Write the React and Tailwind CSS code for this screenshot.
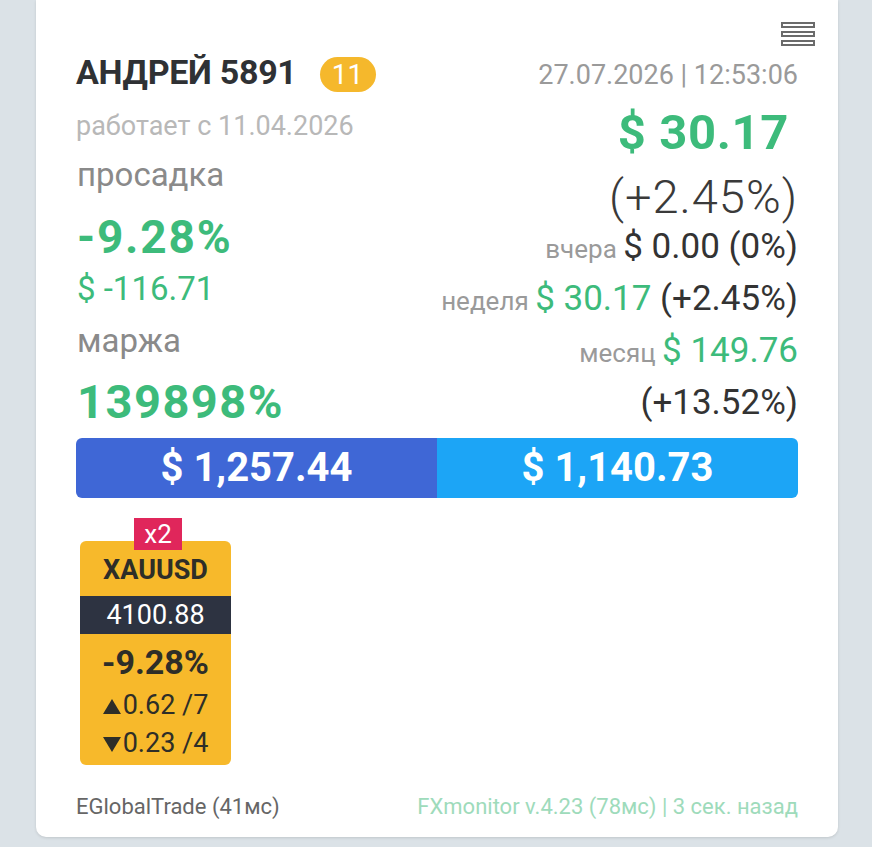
export default function App() {
  const font = { fontFamily: "Roboto, 'Noto Sans', sans-serif" };
  return (
    <div className="w-[872px] h-[847px] bg-[#dbe2e7] overflow-hidden" style={font}>
      <div className="ml-[36px] w-[802px] h-[837px] bg-white rounded-b-[10px] shadow-[0_1px_3px_rgba(0,0,0,0.12)] px-[40px] flex flex-col">
        {/* top section */}
        <div className="flex justify-between items-start pt-[22px]">
          {/* left column */}
          <div className="flex flex-col mt-[30px]">
            <div className="h-[40px] flex items-center">
              <span className="text-[34px] leading-[40px] font-bold text-[#2f3134] tracking-[-0.3px]">АНДРЕЙ 5891</span>
              <span className="ml-[23px] mt-[4px] w-[56px] h-[35px] rounded-full bg-[#f5b82c] text-white text-[28px] leading-[35px] text-center">11</span>
            </div>
            <div className="mt-[18px] h-[32px] text-[27px] leading-[32px] text-[#b8b8b8] whitespace-nowrap">работает с 11.04.2026</div>
            <div className="mt-[15px] pl-[1px] h-[36px] text-[33px] leading-[36px] text-[#8a8a8a]">просадка</div>
            <div className="mt-[20px] pl-[1px] h-[48px] text-[46px] leading-[48px] font-bold text-[#3dbb7b] tracking-[1.8px]">-9.28%</div>
            <div className="mt-[10px] pl-[1px] h-[36px] text-[33px] leading-[36px] text-[#3dbb7b]">$ -116.71</div>
            <div className="mt-[16px] pl-[1px] h-[36px] text-[33px] leading-[36px] text-[#8a8a8a]">маржа</div>
            <div className="mt-[19px] pl-[1px] h-[48px] text-[47px] leading-[48px] font-bold text-[#3dbb7b] tracking-[1.5px]">139898%</div>
          </div>
          {/* right column */}
          <div className="flex flex-col items-end">
            <div className="flex flex-col gap-[3px] mr-[-17px]">
              <div className="w-[34px] h-[6px] border-2 border-[#6b6b6b]"></div>
              <div className="w-[34px] h-[6px] border-2 border-[#6b6b6b]"></div>
              <div className="w-[34px] h-[6px] border-2 border-[#6b6b6b]"></div>
            </div>
            <div className="mt-[13px] h-[32px] text-[27px] leading-[32px] text-[#9a9a9a] whitespace-nowrap">27.07.2026 | 12:53:06</div>
            <div className="mt-[17px] mr-[9px] h-[50px] text-[49px] leading-[50px] font-bold text-[#3dbb7b] tracking-[0.6px] whitespace-nowrap">$ 30.17</div>
            <div className="mt-[14px] h-[50px] text-[47px] leading-[50px] font-light text-[#3a3a3a] tracking-[1px]">(+2.45%)</div>
            <div className="mt-[5px] h-[40px] flex items-baseline whitespace-nowrap leading-[40px]">
              <span className="text-[26px] text-[#9a9a9a]">вчера&nbsp;</span>
              <span className="text-[35px] text-[#333]">$ 0.00 (0%)</span>
            </div>
            <div className="mt-[12px] h-[40px] flex items-baseline whitespace-nowrap leading-[40px]">
              <span className="text-[26px] text-[#9a9a9a]">неделя&nbsp;</span>
              <span className="text-[35px] text-[#3dbb7b]">$ 30.17&nbsp;</span>
              <span className="text-[35px] text-[#333]">(+2.45%)</span>
            </div>
            <div className="mt-[12px] h-[40px] flex items-baseline whitespace-nowrap leading-[40px]">
              <span className="text-[26px] text-[#9a9a9a]">месяц&nbsp;</span>
              <span className="text-[35px] text-[#3dbb7b]">$ 149.76</span>
            </div>
            <div className="mt-[12px] h-[40px] leading-[40px] text-[35px] text-[#333]">(+13.52%)</div>
          </div>
        </div>

        {/* balance bar */}
        <div className="mt-[12px] h-[60px] flex rounded-[6px] overflow-hidden shrink-0">
          <div className="flex-1 bg-[#3f67d6] flex items-center justify-center text-white text-[40px] font-bold">$ 1,257.44</div>
          <div className="flex-1 bg-[#1ca5f6] flex items-center justify-center text-white text-[40px] font-bold">$ 1,140.73</div>
        </div>

        {/* tile */}
        <div className="mt-[43px] ml-[4px] relative w-[151px] h-[224px] shrink-0 bg-[#f7b92b] rounded-[6px] flex flex-col items-center">
          <div className="absolute left-[54px] top-[-23px] w-[48px] h-[32px] bg-[#e0265b] text-white text-[26px] leading-[32px] text-center">x2</div>
          <div className="mt-[14px] h-[30px] leading-[30px] text-[27px] font-bold text-[#2e2e28]">XAUUSD</div>
          <div className="mt-[11px] w-full h-[38px] bg-[#2d3341] text-white text-[27px] leading-[38px] text-center">4100.88</div>
          <div className="mt-[10px] h-[36px] leading-[36px] text-[34px] font-bold text-[#2e2e28]">-9.28%</div>
          <div className="mt-[8px] h-[34px] flex items-center text-[27px] text-[#2e2e28] whitespace-nowrap">
            <svg width="18" height="15" viewBox="0 0 18 15" className="mr-[2px] mt-[2px]"><path d="M9 0 L18 15 L0 15 Z" fill="#2e2e28" /></svg>
            <span className="leading-[34px]">0.62 /7</span>
          </div>
          <div className="mt-[4px] h-[34px] flex items-center text-[27px] text-[#2e2e28] whitespace-nowrap">
            <svg width="18" height="15" viewBox="0 0 18 15" className="mr-[2px] mt-[2px]"><path d="M0 0 L18 0 L9 15 Z" fill="#2e2e28" /></svg>
            <span className="leading-[34px]">0.23 /4</span>
          </div>
        </div>

        {/* footer */}
        <div className="mt-[28px] flex justify-between text-[22px] leading-[28px] whitespace-nowrap">
          <span className="text-[#666]">EGlobalTrade (41мс)</span>
          <span className="text-[#9edbbb]">FXmonitor v.4.23 (78мс) | 3 сек. назад</span>
        </div>
      </div>
    </div>
  );
}
